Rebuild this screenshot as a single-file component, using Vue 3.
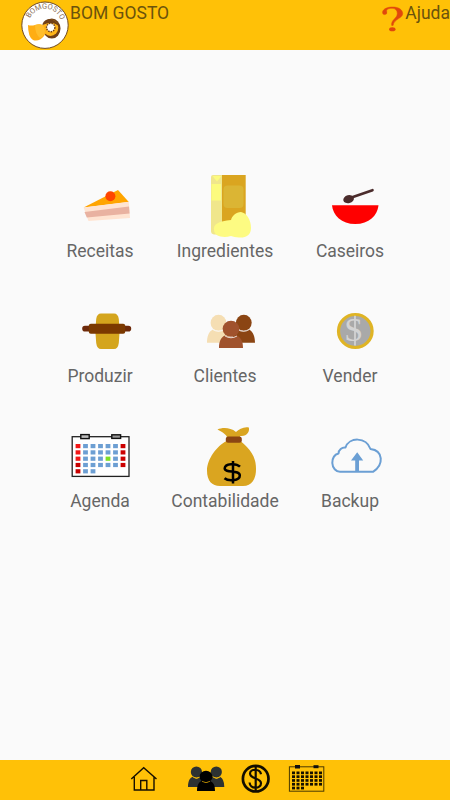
<script setup>
const days = []
for (let r = 0; r < 5; r++) {
  for (let c = 0; c < 7; c++) {
    if (r === 4 && c > 2) continue
    let fill = '#6d9fd3'
    if (c === 0) fill = r < 3 ? '#f31616' : '#c80000'
    if (c === 6) fill = '#cc0000'
    if (r === 2 && c === 4) fill = '#7fe022'
    days.push({ x: 75.6 + c * 7.5, y: 444 + r * 6.3, bx: 292 + c * 4.5, by: 771.5 + r * 3.8, fill })
  }
}
</script>

<template>
  <div class="screen">
    <header class="top">
      <div class="brand">
        <svg class="logo" width="50" height="50" viewBox="20 0 50 50">
          <circle cx="45" cy="25.2" r="23.2" fill="#fff" stroke="#704a22" stroke-width="1" />
          <path id="arc" d="M30 18.4A16.4 16.4 0 0 1 61.2 22.6" fill="none" />
          <text class="logo-text"><textPath href="#arc" textLength="39.5">BOMGOSTO</textPath></text>
          <ellipse cx="51.8" cy="28.6" rx="8.7" ry="10" fill="#704018" />
          <ellipse cx="50.5" cy="27.8" rx="7.8" ry="8.2" fill="#ffb51a" />
          <path d="M42.5 24q2-5 8-5 6 1 9 8-4-4-8-4-5 0-9 2z" fill="#704018" />
          <circle cx="50.7" cy="27.5" r="4.2" fill="#fff" stroke="#704018" stroke-width="1.4" stroke-dasharray="1.5 1" />
          <path d="M28 25q3 1 7 0 6-2 9 1 3 6 0 10-5 6-11 4-5-3-5-15z" fill="#ffad13" />
          <path d="M35 25q7-2 9 2 3 8-4 11-5-4-5-13z" fill="#ffbd2b" />
        </svg>
        <span class="title">BOM GOSTO</span>
      </div>
      <div class="help">
        <svg width="24" height="34" viewBox="381.5 0 24 34">
          <path d="M385.2 14.6Q383 14.8 383 12.3C383.5 8.8 388 7 393 7C399 7 403.2 9.7 403.2 13.6C403.2 18.5 394.5 18.8 393.6 25.4H392.2C391.2 19.8 397.8 18.5 397.8 13.5C397.8 10.3 395.8 8.3 392.6 8.3C389 8.3 386.6 9.5 387.2 11.6Q388 14.4 385.2 14.6Z" fill="#e0480c" stroke="#e0480c" stroke-width=".5" />
          <ellipse cx="392.8" cy="29.3" rx="3.2" ry="2" fill="#e0480c" />
        </svg>
        <span>Ajuda</span>
      </div>
    </header>

    <main class="grid">
      <div class="cell">
        <svg width="125" height="75" viewBox="37 165 125 75">
          <path d="M83.6 207.5L118 190L128.8 202z" fill="#ffa500" />
          <path d="M83.6 207.5L128.8 201.7L130 218L88.5 221z" fill="#ffe4d2" />
          <path d="M84.5 212L129 206.6L129.6 213.5L86.8 217.6z" fill="#e9b2a1" />
          <circle cx="110.4" cy="196.3" r="5" fill="#ff4500" />
        </svg>
        <span class="label">Receitas</span>
      </div>
      <div class="cell">
        <svg width="125" height="75" viewBox="162 165 125 75">
          <path d="M213 175H222.5V234.5H214Q211 234 211 231V177Q211 175 213 175z" fill="#f0e68c" />
          <path d="M222 175H245.7V234H222z" fill="#daa520" />
          <path d="M212.5 176H221.5L217 181.5z" fill="#fcfb7e" />
          <rect x="211.5" y="184" width="9.5" height="16.5" fill="#fcfb7e" />
          <rect x="223.5" y="185.5" width="20" height="22.5" rx="4" fill="#dbb534" />
          <path d="M214 230C213 224 219 221 231 220C232 216 236 212 241 212C247 213 251 220 251 228C251 235 246 238 239 237.5Q234 237 231 236C223 238.5 214 236 214 230z" fill="#fdfb82" />
        </svg>
        <span class="label">Ingredientes</span>
      </div>
      <div class="cell">
        <svg width="125" height="75" viewBox="287 165 125 75">
          <path d="M332 205.2H378.5C377.5 215.5 369 224 355.2 224C341.5 224 333 215.5 332 205.2z" fill="#f00" />
          <path d="M350 198L372.5 190.2" stroke="#4b2c2c" stroke-width="2.6" stroke-linecap="round" />
          <ellipse cx="348.6" cy="199.2" rx="5.4" ry="4" transform="rotate(-14 348.6 199.2)" fill="#4b2c2c" />
        </svg>
        <span class="label">Caseiros</span>
      </div>

      <div class="cell">
        <svg width="125" height="75" viewBox="37 290 125 75">
          <path d="M101 313.5H114Q118 313.5 118.8 319Q120.5 331 118.8 343Q118 349 114 349H101Q97 349 96.2 343Q94.5 331 96.2 319Q97 313.5 101 313.5z" fill="#d4a51d" />
          <rect x="82.2" y="325.8" width="49" height="5.8" rx="2.8" fill="#6e2a0a" />
          <rect x="88.8" y="323.8" width="36.4" height="10" rx="2" fill="#7b3900" />
        </svg>
        <span class="label">Produzir</span>
      </div>
      <div class="cell">
        <svg width="125" height="75" viewBox="162 290 125 75">
          <g fill="#f5deb3"><ellipse cx="218.5" cy="322.8" rx="7.9" ry="8" /><path d="M207 342.8C207 337 208.5 331.5 213 329.5Q218.5 333 224 329.5C229 332 230.5 337 230.5 342.8z" /></g>
          <g fill="#8b4513"><ellipse cx="243.8" cy="322.8" rx="7.9" ry="8" /><path d="M232 342.8C232 337 233.5 331.5 238 329.5Q243.5 333 249 329.5C253.5 332 255 337 255 342.8z" /></g>
          <path d="M213 329.7Q218.5 333 224 329.7M238 329.7Q243.5 333 249 329.7" fill="none" stroke="#fafafa" stroke-width=".8" />
          <g fill="#a0522d"><path d="M219 348C219 342 220.5 337.5 225 335.5Q231 339 237 335.5C241.5 338 243 342 243 348z" /><ellipse cx="231" cy="328.8" rx="8.4" ry="8" /></g>
          <path d="M225 336Q231 339.5 237 336" fill="none" stroke="#fafafa" stroke-width=".8" />
        </svg>
        <span class="label">Clientes</span>
      </div>
      <div class="cell">
        <svg width="125" height="75" viewBox="287 290 125 75">
          <ellipse cx="355.3" cy="331" rx="16.8" ry="16.5" fill="#a9a9a9" stroke="#dfb425" stroke-width="3.2" />
          <path d="M355 315.7V345.5" stroke="#d3d3d3" stroke-width="1.8" />
          <text class="coin" x="353.8" y="341.3">S</text>
        </svg>
        <span class="label">Vender</span>
      </div>

      <div class="cell">
        <svg width="125" height="75" viewBox="37 415 125 75">
          <rect x="72.2" y="436.7" width="56.8" height="39.7" fill="#fff" stroke="#222" stroke-width="1.3" />
          <rect x="80.8" y="434.6" width="8.4" height="4" fill="#bbb" stroke="#111" stroke-width="1.4" />
          <rect x="111.8" y="434.8" width="8.8" height="3.6" fill="#999" stroke="#111" stroke-width="1.4" />
          <rect v-for="(d, i) in days" :key="i" :x="d.x" :y="d.y" width="4.8" height="4.2" :fill="d.fill" />
        </svg>
        <span class="label">Agenda</span>
      </div>
      <div class="cell">
        <svg width="125" height="75" viewBox="162 415 125 75">
          <path d="M226.5 441C217 446 207 459 207 470.5C207 481 212 486 220 486H243C252 486 256 479 256 469C256 456 250 449 240.5 441L240 436C247 437 250 431 248.8 427.5C244 426.5 239 429 236 432C230 427 222 427.5 217.5 429.5C221 431.5 225 433 227 437z" fill="#daa520" />
          <rect x="225.8" y="436.5" width="16" height="6.2" rx="2.5" fill="#8b4513" />
          <path d="M233 461V483.5M240 466.7C236 462.8 225 463.5 224.7 468.3C224.7 473.6 239.8 469.5 239.8 475.5C239.8 481.3 228 481.3 224.5 478.2" fill="none" stroke="#000" stroke-width="2.5" />
        </svg>
        <span class="label">Contabilidade</span>
      </div>
      <div class="cell">
        <svg width="125" height="75" viewBox="287 415 125 75">
          <path d="M340 471.8H373C384 465 383.5 450.5 370.5 449C366 436.5 349 437 345.5 447.5C342 447 338.5 450 338.5 453.5C333 455 332.3 459 332.3 463C332.5 468 336 471.8 340 471.8z" fill="none" stroke="#6b9fd4" stroke-width="2" stroke-linejoin="round" />
          <path d="M357.2 452.2L363.2 460.5H359V471.5H355.2V460.5H351z" fill="#6b9fd4" />
        </svg>
        <span class="label">Backup</span>
      </div>
    </main>

    <footer class="bottom">
      <svg width="450" height="40" viewBox="0 760 450 40">
        <path d="M131.3 779L143.7 767.7L156.5 779M134.3 777V790H154V777M140.7 790V780.5H146.8V790" fill="none" stroke="#160f00" stroke-width="1.4" />
        <g fill="#2d3232">
          <circle cx="196.4" cy="772" r="5.6" /><path d="M188 787C188 781 190 777.5 193 776.8Q196.5 780 200 776.8Q205 779 205 787z" />
          <circle cx="216.3" cy="772" r="5.6" /><path d="M208 787C208 781 209 777.5 213 776.8Q216.5 780 220 776.8Q224.3 779 224.3 787z" />
        </g>
        <path d="M193 777Q196.5 780 200 777M213 777Q216.5 780 220 777" fill="none" stroke="#ffc107" stroke-width=".8" />
        <g fill="#000"><ellipse cx="206" cy="776.6" rx="6.5" ry="5.8" /><path d="M197 791C197 785 199 781.5 202 781Q206 784 210 781C214 782.5 215 786 215 791z" /></g>
        <path d="M202 781.3Q206 784 210 781.3" fill="none" stroke="#dba400" stroke-width=".7" />
        <circle cx="255.7" cy="778.7" r="12.8" fill="none" stroke="#130e00" stroke-width="2.7" />
        <path d="M255.7 766V791M261 774.2C260 768.5 250.3 768.3 250 773.5C250 779.6 261 777.3 261 783.2C261 789.4 249.7 789.2 249.6 782.5" fill="none" stroke="#130e00" stroke-width="2.2" />
        <rect x="289.4" y="766.8" width="34.4" height="24.4" fill="none" stroke="#4b3900" stroke-width="1" />
        <rect x="295" y="765" width="5" height="3.5" fill="#111" />
        <rect x="313.5" y="765.2" width="5" height="3" fill="#111" />
        <rect v-for="(d, i) in days" :key="i" :x="d.bx" :y="d.by" width="3" height="2.7" fill="#171100" />
      </svg>
    </footer>
  </div>
</template>

<style>
body { background: #fafafa; }
</style>

<style scoped>
.screen {
  display: flex;
  flex-direction: column;
  width: 450px;
  height: 800px;
  overflow: hidden;
  background: #fafafa;
  font-family: Roboto, sans-serif;
  font-size: 17.5px;
}
svg { display: block; flex: none; }
.top {
  display: flex;
  justify-content: space-between;
  height: 50px;
  background: #ffc107;
  color: #6b530c;
  line-height: 26px;
}
.brand { display: flex; padding-left: 20px; }
.help { display: flex; }
.title { white-space: nowrap; }
.logo-text { font: 7.5px Roboto, sans-serif; fill: #8a705a; }
.coin { font: 34px "Liberation Serif", serif; fill: #d3d3d3; text-anchor: middle; }
.grid {
  flex: 1;
  display: grid;
  grid-template-columns: repeat(3, 125px);
  grid-auto-rows: 125px;
  padding: 115px 38px 0 37px;
}
.cell { display: flex; flex-direction: column; align-items: center; }
.label { padding-left: 1px; line-height: 23px; color: #666; white-space: nowrap; }
.bottom { height: 40px; background: #ffc107; }
</style>
